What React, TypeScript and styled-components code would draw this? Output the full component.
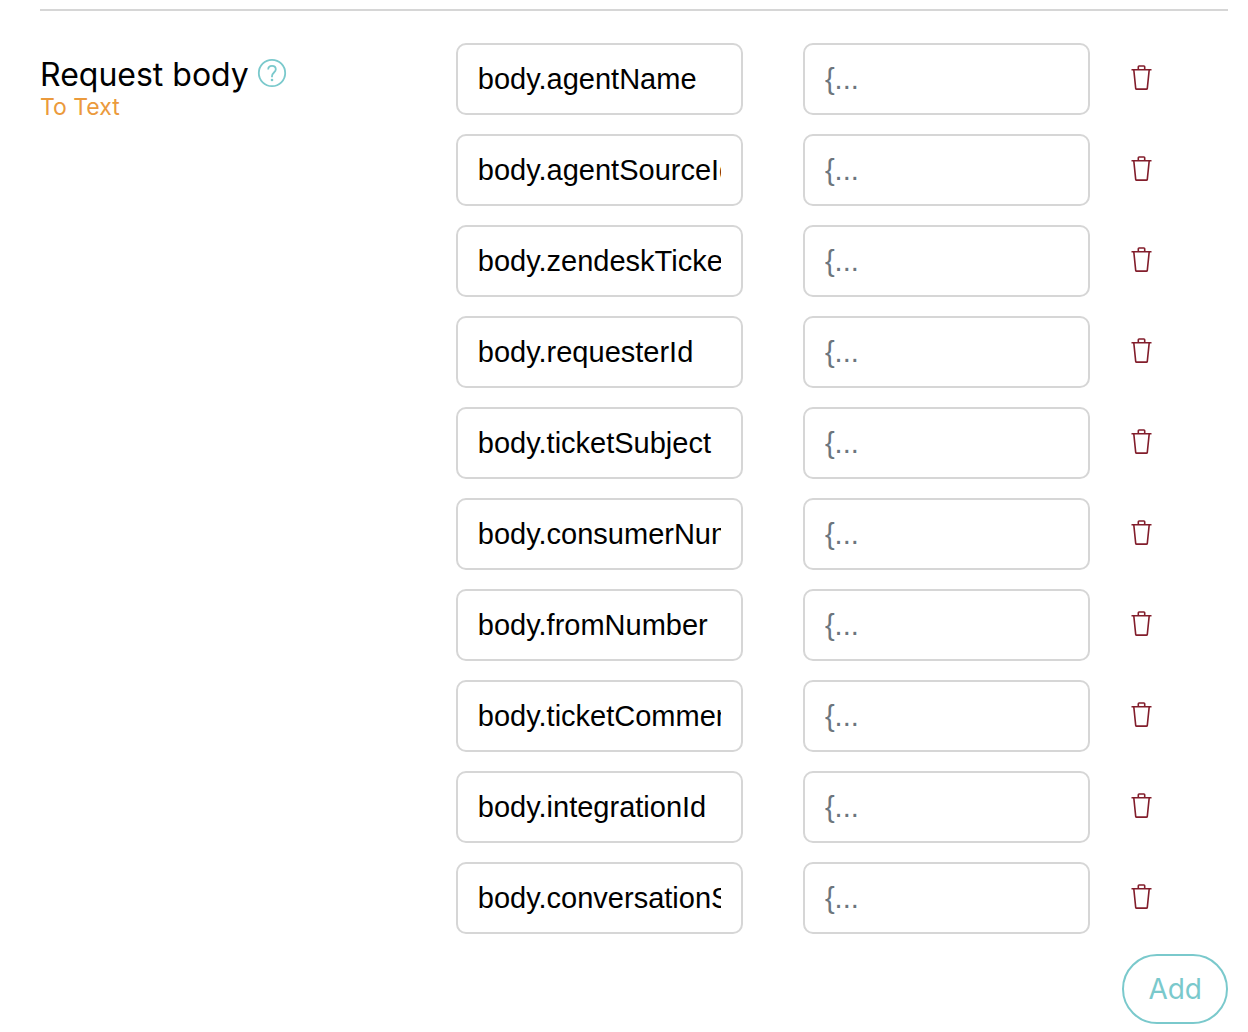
import React, { useState } from "react";
import styled, { createGlobalStyle } from "styled-components";

const teal = "#7ac9cc";
const display = `Inter, "Noto Sans", sans-serif`;
const body = `"Liberation Sans", Arial, sans-serif`;

const GlobalStyle = createGlobalStyle`
  *, *::before, *::after { box-sizing: border-box; }
  body { margin: 0; background: #fff; color: #000; font-family: ${body}; }
`;

const Page = styled.main`
  padding: 9px 20px 8px 40px;
`;

const Section = styled.section`
  display: grid;
  grid-template-columns: 35% minmax(0, 1fr);
  border-top: 2px solid #d6d6d6;
  padding-top: 32px;
`;

const Heading = styled.header`
  padding-top: 13px;
`;

const TitleLine = styled.div`
  display: flex;
  align-items: center;
  gap: 8px;
  height: 37px;
`;

const Title = styled.h2`
  margin: 0;
  font: 400 32px/38px ${display};
`;

const Mode = styled.p`
  margin: 0;
  color: #eb9a3c;
  font: 400 23px/28px ${display};
`;

const IconButton = styled.button`
  display: flex;
  padding: 0;
  border: 0;
  background: none;
  cursor: pointer;
`;

const HelpButton = styled(IconButton)`
  padding-bottom: 4px;
  color: ${teal};
`;

const DeleteButton = styled(IconButton)`
  color: #821d2b;
`;

const Rows = styled.ul`
  display: flex;
  flex-direction: column;
  gap: 19px;
  margin: 0;
  padding: 0;
  list-style: none;
`;

const Row = styled.li`
  display: grid;
  grid-template-columns: minmax(0, 1fr) 138px;
  align-items: center;
`;

const Fields = styled.div`
  display: grid;
  grid-template-columns: repeat(2, minmax(0, 1fr));
  gap: 60px;
`;

const Field = styled.input`
  width: 100%;
  height: 72px;
  padding: 0 20px;
  border: 2px solid #d6d6d6;
  border-radius: 10px;
  background: #fff;
  color: #000;
  font: 400 29px/36px ${body};
  &::placeholder { color: #6c757d; opacity: 1; }
`;

const Actions = styled.div`
  padding-left: 39px;
`;

const Footer = styled.footer`
  display: flex;
  justify-content: flex-end;
  padding-top: 20px;
`;

const AddButton = styled.button`
  height: 70px;
  padding: 0 24px;
  border: 2px solid ${teal};
  border-radius: 35px;
  background: #fff;
  color: ${teal};
  font: 400 28px/36px ${display};
  cursor: pointer;
`;

const HelpIcon = () => (
  <svg width="30" height="30" viewBox="0 0 30 30" fill="none" stroke="currentColor" strokeWidth="1.8" aria-hidden="true">
    <circle cx="15" cy="15" r="13.2" />
    <path d="M11.2 11.4C11.2 9.1 12.8 7.8 15 7.8s3.8 1.4 3.8 3.5c0 3-3.8 3.5-3.8 6.9v1" />
    <circle cx="15" cy="22" r="1.3" fill="currentColor" stroke="none" />
  </svg>
);

const TrashIcon = () => (
  <svg width="24" height="32" viewBox="0 0 24 32" fill="none" stroke="currentColor" strokeWidth="1.6" aria-hidden="true">
    <path d="M2.5 6.8h20M9.3 6.5V3.8q0-.8.8-.8h4.8q.8 0 .8.8v2.7" />
    <path d="M4.8 6.8 6.7 25.3q.1.8.9.8h9.8q.8 0 .9-.8L20.2 6.8" />
  </svg>
);

const initialKeys = [
  "body.agentName",
  "body.agentSourceId",
  "body.zendeskTicketId",
  "body.requesterId",
  "body.ticketSubject",
  "body.consumerNumber",
  "body.fromNumber",
  "body.ticketComment",
  "body.integrationId",
  "body.conversationSid",
];

export default function App() {
  const [rows, setRows] = useState(initialKeys.map((key, id) => ({ id, key })));

  const rename = (id: number, key: string) =>
    setRows(rows.map((row) => (row.id === id ? { id, key } : row)));
  const remove = (id: number) => setRows(rows.filter((row) => row.id !== id));
  const add = () =>
    setRows([...rows, { id: Math.max(-1, ...rows.map((row) => row.id)) + 1, key: "" }]);

  return (
    <Page>
      <GlobalStyle />
      <Section>
        <Heading>
          <TitleLine>
            <Title>Request body</Title>
            <HelpButton type="button" aria-label="Help"><HelpIcon /></HelpButton>
          </TitleLine>
          <Mode>To Text</Mode>
        </Heading>
        <div>
          <Rows>
            {rows.map((row) => (
              <Row key={row.id}>
                <Fields>
                  <Field aria-label="Key" value={row.key} onChange={(e) => rename(row.id, e.target.value)} />
                  <Field aria-label="Value" placeholder="{..." />
                </Fields>
                <Actions>
                  <DeleteButton type="button" aria-label="Delete" onClick={() => remove(row.id)}>
                    <TrashIcon />
                  </DeleteButton>
                </Actions>
              </Row>
            ))}
          </Rows>
          <Footer>
            <AddButton type="button" onClick={add}>Add</AddButton>
          </Footer>
        </div>
      </Section>
    </Page>
  );
}
